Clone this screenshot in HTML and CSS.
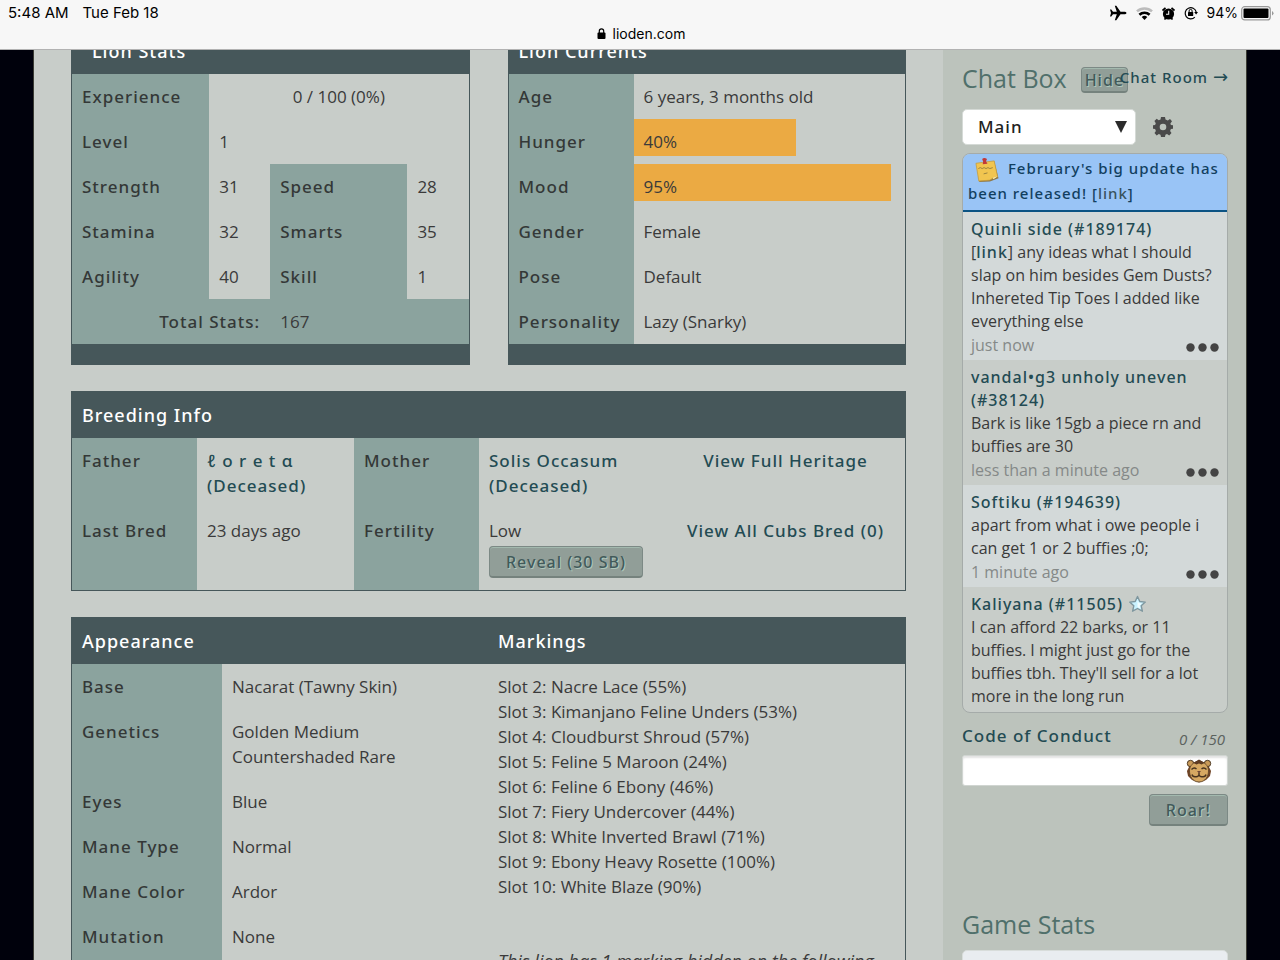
FILE: index.html
```html
<!DOCTYPE html>
<html lang="en">
<head>
<meta charset="utf-8">
<title>Lioden</title>
<link rel="stylesheet" href="styles.css">
</head>
<body>
<header class="status">
  <div class="status-row">
    <div class="status-left"><span>5:48 AM</span><span>Tue Feb 18</span></div>
    <div class="status-right">
      <svg width="18" height="16" viewBox="0 0 18 16"><path d="M17.5 8c0-.8-1.300-1.300-2.300-1.300h-3.700L7.300.8H5.800l2 5.900H4L2.300 4.600H1L2 8 1 11.400h1.300L4 9.300h3.800l-2 5.900h1.500l4.200-5.900h3.700c1 0 2.300-.5 2.300-1.300z"/></svg>
      <svg width="17" height="13" viewBox="0 0 17 13"><g fill="none" stroke-width="2.600"><path d="M1 4.400a11 11 0 0 1 15 0" stroke="#bcbcbc"/><path d="M3.400 7.800a7.400 7.400 0 0 1 10.200 0" stroke="#000"/></g><path d="M8.500 13 5.700 10a4 4 0 0 1 5.600 0z"/></svg>
      <svg width="13" height="13" viewBox="0 0 13 13"><circle cx="6.500" cy="7" r="5.600"/><path d="M.5 3.500 3.500.8M12.500 3.500 9.500.8M2.500 12.500l1.500-1.700M10.500 12.500 9 10.800" stroke="#000" stroke-width="1.700"/><path d="M6.700 3.800v3.400H4" fill="none" stroke="#f7f7f7" stroke-width="1.100"/></svg>
      <svg width="14" height="14" viewBox="0 0 14 14"><path d="M10.800 11.200A5.600 5.600 0 1 1 12.200 6" fill="none" stroke="#000" stroke-width="1.200"/><path d="M10.200 6h3.800l-1.900 2.600z"/><rect x="4" y="6" width="5.200" height="3.900" rx=".5"/><path d="M5.100 6V4.900a1.500 1.500 0 0 1 3 0V6" fill="none" stroke="#000"/></svg>
      <span>94%</span>
      <svg width="33" height="15" viewBox="0 0 33 15"><rect x=".7" y=".7" width="28.600" height="13.200" rx="3" fill="none" stroke="#999" stroke-width="1.200"/><rect x="2.500" y="2.500" width="25" height="9.600" rx="1"/><path d="M31 5v4.600q1.500-.8 1.500-2.300T31 5z" fill="#999"/></svg>
    </div>
  </div>
  <div class="address">
    <svg width="9" height="11" viewBox="0 0 9 11"><rect x=".5" y="4.500" width="8" height="6.500" rx="1"/><path d="M2.300 5V3a2.200 2.200 0 0 1 4.400 0v2" fill="none" stroke="#000" stroke-width="1.200"/></svg>
    <span>lioden.com</span>
  </div>
</header>

<div class="scroller">
<div class="page">
  <main class="content">
    <div class="pair">
      <table class="panel">
        <colgroup><col class="w-stat"><col class="w-num"><col class="w-stat"><col class="w-num"></colgroup>
        <thead><tr><th colspan="4" class="head-inset">Lion Stats</th></tr></thead>
        <tbody>
          <tr><th scope="row">Experience</th><td colspan="3" class="center">0 / 100 (0%)</td></tr>
          <tr><th scope="row">Level</th><td colspan="3">1</td></tr>
          <tr><th scope="row">Strength</th><td>31</td><th scope="row">Speed</th><td>28</td></tr>
          <tr><th scope="row">Stamina</th><td>32</td><th scope="row">Smarts</th><td>35</td></tr>
          <tr><th scope="row">Agility</th><td>40</td><th scope="row">Skill</th><td>1</td></tr>
          <tr class="total"><th scope="row" colspan="2">Total Stats:</th><td colspan="2">167</td></tr>
        </tbody>
        <tfoot><tr><td colspan="4"></td></tr></tfoot>
      </table>
      <table class="panel">
        <colgroup><col class="w-current"><col></colgroup>
        <thead><tr><th colspan="2">Lion Currents</th></tr></thead>
        <tbody>
          <tr><th scope="row">Age</th><td>6 years, 3 months old</td></tr>
          <tr><th scope="row">Hunger</th><td class="meter"><div class="bar" style="width:60%">40%</div></td></tr>
          <tr><th scope="row">Mood</th><td class="meter"><div class="bar" style="width:95%">95%</div></td></tr>
          <tr><th scope="row">Gender</th><td>Female</td></tr>
          <tr><th scope="row">Pose</th><td>Default</td></tr>
          <tr><th scope="row">Personality</th><td>Lazy (Snarky)</td></tr>
        </tbody>
        <tfoot><tr><td colspan="2"></td></tr></tfoot>
      </table>
    </div>

    <table class="panel">
      <colgroup><col class="w-breed"><col class="w-father"><col class="w-breed"><col class="w-mother"><col></colgroup>
      <thead><tr><th colspan="5">Breeding Info</th></tr></thead>
      <tbody>
        <tr><th scope="row">Father</th><td><a href="#">ℓ o r e t ɑ<br>(Deceased)</a></td><th scope="row">Mother</th><td><a href="#">Solis Occasum (Deceased)</a></td><td class="center"><a href="#">View Full Heritage</a></td></tr>
        <tr><th scope="row">Last Bred</th><td>23 days ago</td><th scope="row">Fertility</th><td>Low<button type="button" class="btn reveal">Reveal (30 SB)</button></td><td class="center"><a href="#">View All Cubs Bred (0)</a></td></tr>
      </tbody>
    </table>

    <table class="panel">
      <colgroup><col class="w-look"><col class="w-value"><col></colgroup>
      <thead><tr><th colspan="2">Appearance</th><th>Markings</th></tr></thead>
      <tbody>
        <tr><th scope="row">Base</th><td>Nacarat (Tawny Skin)</td>
          <td rowspan="7">Slot 2: Nacre Lace (55%)<br>Slot 3: Kimanjano Feline Unders (53%)<br>Slot 4: Cloudburst Shroud (57%)<br>Slot 5: Feline 5 Maroon (24%)<br>Slot 6: Feline 6 Ebony (46%)<br>Slot 7: Fiery Undercover (44%)<br>Slot 8: White Inverted Brawl (71%)<br>Slot 9: Ebony Heavy Rosette (100%)<br>Slot 10: White Blaze (90%)<p class="hidden-note"><em>This lion has 1 marking hidden on the following</em></p></td></tr>
        <tr><th scope="row">Genetics</th><td>Golden Medium<br>Countershaded Rare</td></tr>
        <tr><th scope="row">Eyes</th><td>Blue</td></tr>
        <tr><th scope="row">Mane Type</th><td>Normal</td></tr>
        <tr><th scope="row">Mane Color</th><td>Ardor</td></tr>
        <tr><th scope="row">Mutation</th><td>None</td></tr>
        <tr class="filler"><th></th><td></td></tr>
      </tbody>
    </table>
  </main>

  <aside class="sidebar">
    <div class="chat-head">
      <h2>Chat Box</h2>
      <button type="button" class="btn hide">Hide</button>
      <a href="#" class="room">Chat Room <span class="arrow">→</span></a>
    </div>
    <div class="channel">
      <div class="select-wrap">
        <select aria-label="Channel"><option>Main</option></select>
        <span class="caret" aria-hidden="true"></span>
      </div>
      <button type="button" class="icon-btn" aria-label="Chat settings">
        <svg width="20" height="20" viewBox="-10 -10 20 20" fill="#4a4a4a"><path fill-rule="evenodd" d="M-2-10h4l.5 2.500 2.300 1L7-8l2 2.200L7.400-3.600l.5 1.600L10-1.700v3.400L7.900 2l-.8 2L8.500 6 6.200 8.400 4 7l-1.600.7L2 10h-4l-.5-2.300L-4.200 7-6.300 8.400-8.500 6l1.400-2-.8-2L-10 1.700v-3.400L-7.900-2l.7-1.700L-8.600-6-6.300-8.300l2 1.600 1.800-.8zM0-3.300a3.300 3.300 0 1 0 0 6.600 3.300 3.300 0 0 0 0-6.600z"/></svg>
      </button>
    </div>

    <div class="chat">
      <div class="notice">
        <svg class="note" width="26" height="26" viewBox="0 0 26 26"><path d="m3 6.500 17.500-3L25 21l-9 3.500-11 .5z" fill="#8d7748"/><path d="m1.500 5.500 19-2.500 3.500 16.500-5 1.500-3 2L4.500 24z" fill="#f1c550" stroke="#c49b3e" stroke-width=".8"/><path d="m4 11 2-1 2 1 2-1 2 1 2-1 2 1 3-1M9.500 16.500l4-1" fill="none" stroke="#96803f"/><path d="m19 20.500.8 1.500 4.200-3z" fill="#fff0b0"/><path d="M8 1q2-2 5 0l-1 2.500L13.500 6l-5 .5L9 4z" fill="#c23838"/></svg>
        February's big update has been released! [<a href="#" class="dim">link</a>]
      </div>
      <article class="msg light">
        <a href="#" class="author">Quinli side (#189174)</a>
        <p>[<a href="#">link</a>] any ideas what I should slap on him besides Gem Dusts? Inhereted Tip Toes I added like everything else</p>
        <footer><time>just now</time><button type="button" class="icon-btn" aria-label="More"><svg width="33" height="9" viewBox="0 0 33 9" fill="#444"><circle cx="4.500" cy="4.500" r="4.200"/><circle cx="16.500" cy="4.500" r="4.200"/><circle cx="28.500" cy="4.500" r="4.200"/></svg></button></footer>
      </article>
      <article class="msg">
        <a href="#" class="author">vandal•g3 unholy uneven (#38124)</a>
        <p>Bark is like 15gb a piece rn and buffies are 30</p>
        <footer><time>less than a minute ago</time><button type="button" class="icon-btn" aria-label="More"><svg width="33" height="9" viewBox="0 0 33 9" fill="#444"><circle cx="4.500" cy="4.500" r="4.200"/><circle cx="16.500" cy="4.500" r="4.200"/><circle cx="28.500" cy="4.500" r="4.200"/></svg></button></footer>
      </article>
      <article class="msg light">
        <a href="#" class="author">Softiku (#194639)</a>
        <p>apart from what i owe people i can get 1 or 2 buffies ;0;</p>
        <footer><time>1 minute ago</time><button type="button" class="icon-btn" aria-label="More"><svg width="33" height="9" viewBox="0 0 33 9" fill="#444"><circle cx="4.500" cy="4.500" r="4.200"/><circle cx="16.500" cy="4.500" r="4.200"/><circle cx="28.500" cy="4.500" r="4.200"/></svg></button></footer>
      </article>
      <article class="msg">
        <a href="#" class="author">Kaliyana (#11505) <svg class="star" width="19" height="19" viewBox="0 0 19 19"><path d="m9.500 1.500 2.300 5 5.500.6-4.100 3.700 1.200 5.400-4.900-2.700-4.900 2.700 1.200-5.400L1.700 7.100l5.500-.6z" fill="#c9f2ff" stroke="#7f979f" stroke-width="1.400" stroke-linejoin="round"/><path d="m9.500 5 1.300 3 3 .4-2.200 2.100.6 3-2.700-1.500z" fill="#f1fdff"/></svg></a>
        <p>I can afford 22 barks, or 11 buffies. I might just go for the buffies tbh. They'll sell for a lot more in the long run</p>
      </article>
    </div>

    <form class="compose">
      <div class="compose-head"><a href="#">Code of Conduct</a><em>0 / 150</em></div>
      <div class="entry">
        <input type="text" aria-label="Message">
        <button type="button" class="icon-btn lion" aria-label="Emoji">
          <svg width="26" height="24" viewBox="0 0 26 24"><path d="M4 6 1 12l1 5 4 4 7 2.500L20 21l4-4 1-5-3-6-9-5z" fill="#6f4325"/><circle cx="4.500" cy="4.500" r="3.200" fill="#c99a58" stroke="#4d3a25"/><circle cx="21.500" cy="4.500" r="3.200" fill="#c99a58" stroke="#4d3a25"/><path d="M13 2.500c6 0 9.500 4.500 9.500 9.500s-3 11-9.500 11-9.500-6-9.500-11S7 2.500 13 2.500z" fill="#d6a862" stroke="#5a4127" stroke-width=".8"/><path d="m7.500 4 3-2L13 .5l2.500 1.500 3 2-3 1.500L13 4.500l-2.500 1z" fill="#5c3a22"/><path d="M5.500 10.500Q8 7.800 10.500 10M15.500 10q2.500-2.200 5 .5M6 15.500q.5 2.500 3.500 2.200 2.500.5 3.500-2 1 2.500 3.500 2 3 .3 3.500-2.200M13 13.500v2" fill="none" stroke="#48331f" stroke-width="1.400"/><path d="M11 12h4l-2 2.300z" fill="#6e4635"/></svg>
        </button>
      </div>
      <button type="submit" class="btn roar">Roar!</button>
    </form>

    <h2 class="stats-title">Game Stats</h2>
    <div class="stats-box"></div>
  </aside>
</div>
</div>
</body>
</html>
```
FILE: styles.css
```css
*, *::before, *::after { box-sizing: border-box; }

body {
  margin: 0;
  height: 100vh;
  display: flex;
  flex-direction: column;
  background: #00010c;
  color: #3a3a3a;
  font: 16px/25px "Open Sans", "Noto Sans", sans-serif;
}

a { color: #234b53; text-decoration: none; font-family: "Noto Sans", sans-serif; font-weight: 500; letter-spacing: 1px; }
button, input, select { font: inherit; color: inherit; }
p, h2 { margin: 0; }
svg { display: block; flex: none; }

/* device status bar */
.status {
  flex: none;
  height: 50px;
  padding: 3px 6px 0 8px;
  background: #f7f7f7;
  border-bottom: 1px solid #b2b2b2;
  color: #000;
  font: 14px/20px Inter, sans-serif;
}
.status-row, .status-left, .status-right, .address { display: flex; align-items: center; }
.status-row { justify-content: space-between; }
.status-left { gap: 14px; font-size: 15px; }
.status-right { gap: 9px; }
.status-right span { margin-right: -6px; }
.address { justify-content: center; gap: 7px; line-height: 21px; }

.scroller { flex: 1; min-height: 0; overflow-y: auto; scrollbar-width: none; }
.page {
  display: flex;
  max-width: 1214px;
  margin: 0 auto;
  border: solid #3b3c34;
  border-width: 0 1px;
  background: #c8cdc9;
}
.content {
  flex: 1;
  min-width: 0;
  display: flex;
  flex-direction: column;
  gap: 26px;
  margin-top: -23px;
  padding: 0 37px;
}
.pair { display: grid; grid-template-columns: 1fr 1fr; gap: 38px; }

/* data panels */
.panel {
  width: 100%;
  table-layout: fixed;
  border: 1px solid #46575a;
  border-spacing: 0;
  font-size: 17px;
}
.panel th, .panel td { padding: 10px; vertical-align: top; text-align: left; }
.panel tbody th {
  background: #8ba39e;
  color: #343837;
  font-family: "Noto Sans", sans-serif;
  font-weight: 500;
  letter-spacing: 1px;
  white-space: nowrap;
}
.panel thead th {
  background: #46575a;
  color: #fff;
  font: 500 18px/26px "Noto Sans", sans-serif;
  letter-spacing: 1px;
}
.panel thead .head-inset { padding-left: 20px; }
.panel tfoot td { height: 20px; padding: 0; background: #46575a; }
.panel .center { text-align: center; }
.panel .total td { background: #8ba39e; }
.panel .total th { text-align: right; }
.panel .filler td { height: 70px; }
.panel .meter { padding: 0; }
.bar { margin-bottom: 8px; padding: 10px 10px 2px; background: #ebaa43; }

.w-stat { width: 137px; }
.w-num { width: 61px; }
.w-current, .w-breed { width: 125px; }
.w-father { width: 157px; }
.w-mother { width: 187px; }
.w-look { width: 150px; }
.w-value { width: 266px; }
.hidden-note { margin-top: 50px; font-size: 18px; }

.btn {
  display: block;
  border: 1px solid #7c8985;
  border-bottom: 2px solid #75827d;
  border-radius: 4px;
  background: #919e98;
  box-shadow: inset 0 1px #a3b9ae;
  color: #425a5a;
  text-shadow: 1px 1px #b0c8bc;
  font: 500 16px/20px "Noto Sans", sans-serif;
  letter-spacing: 1px;
}
.reveal { margin: 3px 0 2px; padding: 5px 16px 4px; white-space: nowrap; }
.icon-btn { padding: 0; border: 0; background: none; }

/* chat column */
.sidebar {
  flex: 0 0 303px;
  padding: 12px 18px 0 19px;
  background: #bcc3bc;
}
.sidebar h2 { color: #50706b; font-size: 25px; line-height: 32px; font-weight: 400; }
.chat-head { position: relative; display: flex; align-items: center; gap: 14px; }
.hide { margin-top: 4px; padding: 2px 3px 1px; }
.room { position: absolute; right: 0; top: 3px; font-size: 15px; }
.arrow { font: 18px/20px "DejaVu Sans", sans-serif; letter-spacing: 0; }

.channel { display: flex; align-items: center; gap: 17px; margin-top: 15px; }
.select-wrap { position: relative; width: 174px; }
.channel select {
  width: 100%;
  height: 36px;
  padding: 0 15px;
  appearance: none;
  border: 1px solid #d5dad6;
  border-radius: 5px;
  background: #fff;
  color: #222;
  font: 500 17px/24px "Noto Sans", sans-serif;
  letter-spacing: 1px;
}
.caret {
  position: absolute;
  right: 9px;
  top: 12px;
  border: solid transparent;
  border-width: 12px 6px 0;
  border-top-color: #2b2b2b;
  pointer-events: none;
}

.chat {
  margin-top: 8px;
  border: 1px solid #a5aba9;
  border-radius: 8px;
  background: #c8cdc9;
  overflow: hidden;
}
.notice {
  padding: 2px 5px 4px;
  border-bottom: 2px solid #0b5384;
  background: #99c4f6;
  color: #123f60;
  font: 500 15px/25px "Noto Sans", sans-serif;
  letter-spacing: 1px;
}
.notice .dim { color: #38525c; }
.note { display: inline-block; margin: 0 3px -9px 6px; height: 25px; }
.msg { padding: 6px 8px 4px; line-height: 23px; }
.msg.light { background: #d3d9d9; }
.author { display: block; }
.star { display: inline-block; vertical-align: -4px; }
.msg footer { display: flex; justify-content: space-between; align-items: center; margin-top: 1px; line-height: 22px; color: #858988; }
.msg .icon-btn { margin-top: 4px; }

.compose { display: flex; flex-direction: column; margin-top: 10px; }
.compose-head { display: flex; justify-content: space-between; font-size: 17px; }
.compose-head em { padding: 4px 3px 0 0; color: #5b625e; font-size: 15px; }
.entry { position: relative; margin-top: 3px; }
.entry input {
  display: block;
  width: 100%;
  height: 31px;
  border: 1px solid #d0d5d1;
  border-radius: 3px;
  background: #fff;
  box-shadow: inset 0 2px 2px #e3e3e3;
}
.lion { position: absolute; right: 16px; top: 4px; }
.roar { align-self: flex-end; margin-top: 8px; padding: 5px 16px 4px; }
.stats-title { margin-top: 82px; }
.stats-box { height: 60px; margin-top: 10px; border: 1px solid #d8ddda; border-radius: 5px; background: #e9edf0; }
```
